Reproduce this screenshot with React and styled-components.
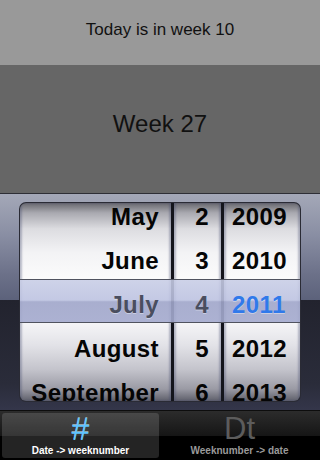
import React from 'react';
import styled, { createGlobalStyle } from 'styled-components';

const GlobalStyle = createGlobalStyle`
  html, body {
    margin: 0;
    padding: 0;
    background: #000;
  }
  body {
    font-family: "Liberation Sans", Arial, sans-serif;
  }
`;

const Screen = styled.div`
  width: 320px;
  height: 460px;
  display: flex;
  flex-direction: column;
  overflow: hidden;
`;

const TodayBar = styled.div`
  height: 66px;
  background: #999999;
  display: flex;
  align-items: center;
  justify-content: center;
  padding-bottom: 6px;
  box-sizing: border-box;
  font-size: 17px;
  color: #111;
`;

const WeekBar = styled.div`
  height: 129px;
  background: #666666;
  display: flex;
  align-items: center;
  justify-content: center;
  padding-bottom: 10px;
  box-sizing: border-box;
  font-size: 24px;
  color: #111;
`;

const PickerFrame = styled.div`
  height: 217px;
  box-sizing: border-box;
  border-top: 1px solid #2e2f36;
  padding: 9px 20px 9px;
  background: linear-gradient(
    to bottom,
    #a4a8b8 0px,
    #8a8fa4 40px,
    #6c7189 80px,
    #5c627b 106px,
    #22232e 106px,
    #2a2c3a 190px,
    #34364a 216px
  );
`;

const Wheels = styled.div`
  position: relative;
  height: 198px;
  display: flex;
  gap: 3px;
  background: #14151c;
  border-radius: 6px;
  overflow: hidden;
  box-shadow: 0 0 0 1px #2a2b35;
`;

const Wheel = styled.div`
  width: ${(p) => p.$width}px;
  box-sizing: border-box;
  padding-top: 5px;
  display: flex;
  flex-direction: column;
  justify-content: center;
  overflow: hidden;
  background: linear-gradient(
    to bottom,
    #68686e 0%,
    #a9a9b0 5%,
    #dcdce0 13%,
    #f3f3f5 25%,
    #fbfbfb 38%,
    #f6f6f8 60%,
    #e2e2e7 72%,
    #c4c4cc 84%,
    #9a9aa4 94%,
    #5e5f6a 100%
  );
  box-shadow: inset 2px 0 2px rgba(70, 75, 110, 0.35),
    inset -2px 0 2px rgba(70, 75, 110, 0.35);
`;

const Row = styled.div`
  position: relative;
  z-index: 1;
  flex: 0 0 44px;
  display: flex;
  align-items: center;
  justify-content: ${(p) => (p.$align === 'left' ? 'flex-start' : 'flex-end')};
  padding: ${(p) => (p.$align === 'left' ? '0 0 0 8px' : '0 12px 0 0')};
  font-size: 24px;
  letter-spacing: 0.4px;
  font-weight: bold;
  color: ${(p) => (p.$selected ? (p.$blue ? '#3079ea' : '#4a4e5f') : '#050505')};
  text-shadow: ${(p) => (p.$selected ? '0 1px 0 rgba(255,255,255,0.4)' : 'none')};
`;

const Selection = styled.div`
  position: absolute;
  left: 0;
  right: 0;
  top: 76px;
  height: 44px;
  box-sizing: border-box;
  border-top: 1px solid #50535f;
  border-bottom: 1px solid #50535f;
  pointer-events: none;
  background: linear-gradient(
    to bottom,
    rgba(200, 205, 230, 0.88) 0%,
    rgba(188, 194, 225, 0.88) 48%,
    rgba(160, 166, 202, 0.9) 52%,
    rgba(164, 170, 206, 0.9) 100%
  );
`;

const TabBar = styled.div`
  flex: 1;
  display: flex;
  padding: 2px;
  gap: 2px;
  background: linear-gradient(to bottom, #2c2c2c 0%, #161616 50%, #000 51%, #000 100%);
  border-top: 1px solid #0d0d0d;
`;

const Tab = styled.div`
  flex: 1;
  display: flex;
  flex-direction: column;
  align-items: center;
  justify-content: flex-end;
  padding-bottom: 2px;
  border-radius: 3px;
  background: ${(p) => (p.$active ? 'rgba(255,255,255,0.14)' : 'transparent')};
`;

const TabIcon = styled.div`
  height: 31px;
  display: flex;
  align-items: center;
  font-size: ${(p) => (p.$active ? 32 : 31)}px;
  line-height: 1;
  color: ${(p) => (p.$active ? '#5fc3ff' : '#5c5c5c')};
  text-shadow: ${(p) => (p.$active ? '0 -1px 0 rgba(200,240,255,0.6)' : 'none')};
`;

const TabLabel = styled.div`
  font-size: 10px;
  font-weight: bold;
  color: ${(p) => (p.$active ? '#ffffff' : '#9a9a9a')};
  margin-top: 1px;
`;

const months = ['May', 'June', 'July', 'August', 'September'];
const days = ['2', '3', '4', '5', '6'];
const years = ['2009', '2010', '2011', '2012', '2013'];

export default function App() {
  return (
    <Screen>
      <GlobalStyle />
      <TodayBar>Today is in week 10</TodayBar>
      <WeekBar>Week 27</WeekBar>
      <PickerFrame>
        <Wheels>
          <Wheel $width={151}>
            {months.map((m, i) => (
              <Row key={m} $selected={i === 2}>
                {m}
              </Row>
            ))}
          </Wheel>
          <Wheel $width={47}>
            {days.map((d, i) => (
              <Row key={d} $selected={i === 2}>
                {d}
              </Row>
            ))}
          </Wheel>
          <Wheel $width={76}>
            {years.map((y, i) => (
              <Row key={y} $align="left" $selected={i === 2} $blue>
                {y}
              </Row>
            ))}
          </Wheel>
          <Selection />
        </Wheels>
      </PickerFrame>
      <TabBar>
        <Tab $active>
          <TabIcon $active>#</TabIcon>
          <TabLabel $active>Date -&gt; weeknumber</TabLabel>
        </Tab>
        <Tab>
          <TabIcon>Dt</TabIcon>
          <TabLabel>Weeknumber -&gt; date</TabLabel>
        </Tab>
      </TabBar>
    </Screen>
  );
}
